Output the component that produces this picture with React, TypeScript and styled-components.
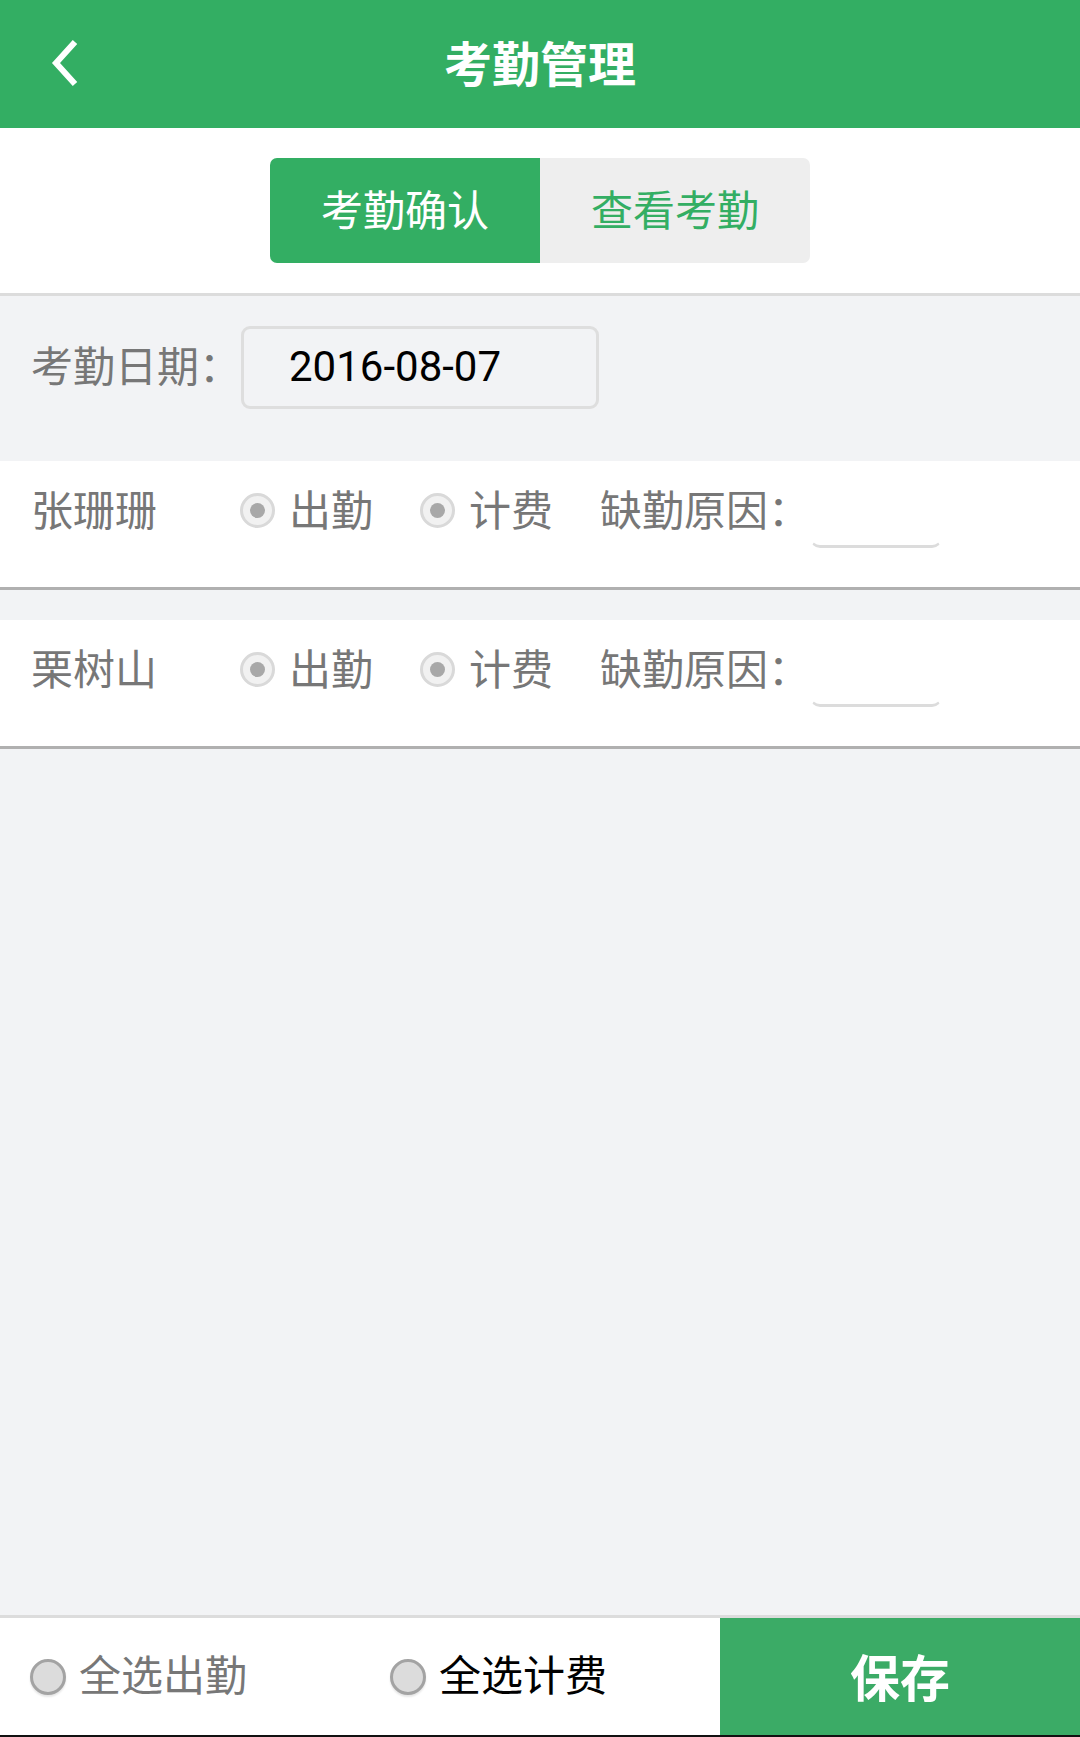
import styled, { createGlobalStyle } from 'styled-components';

const GlobalStyle = createGlobalStyle`
  html, body {
    margin: 0;
    padding: 0;
    background: #f2f3f5;
  }
  * {
    box-sizing: border-box;
  }
  body {
    font-family: Roboto, "Noto Sans CJK SC", sans-serif;
  }
`;

type TStaff = {
  id: number;
  name: string;
};

const staffList: TStaff[] = [
  { id: 1, name: '张珊珊' },
  { id: 2, name: '栗树山' },
];

const BackIcon = () => (
  <svg width='30' height='48' viewBox='0 0 30 48'>
    <polyline points='25,3 6,24 25,45' fill='none' stroke='#fff' strokeWidth='6' />
  </svg>
);

const App = () => {
  return (
    <>
      <GlobalStyle />
      <Page>
        <Header>
          <BackBtn>
            <BackIcon />
          </BackBtn>
          <Title>考勤管理</Title>
        </Header>

        <TabBar>
          <Tabs>
            <Tab active>考勤确认</Tab>
            <Tab>查看考勤</Tab>
          </Tabs>
        </TabBar>

        <DateSection>
          <Label>考勤日期：</Label>
          <DateBox>2016-08-07</DateBox>
        </DateSection>

        {staffList.map((staff) => (
          <StaffRow key={staff.id}>
            <Name>{staff.name}</Name>
            <Option>
              <Radio />
              <OptionText>出勤</OptionText>
            </Option>
            <Option>
              <Radio />
              <OptionText>计费</OptionText>
            </Option>
            <Label>缺勤原因：</Label>
            <ReasonInput />
          </StaffRow>
        ))}

        <Filler />

        <Footer>
          <SelectAll>
            <RoundCheck />
            <SelectText>全选出勤</SelectText>
          </SelectAll>
          <SelectAll>
            <RoundCheck />
            <SelectText dark>全选计费</SelectText>
          </SelectAll>
          <SaveBtn>保存</SaveBtn>
        </Footer>
      </Page>
    </>
  );
};

export default App;

const Page = styled.div`
  display: flex;
  flex-direction: column;
  height: 100vh;
  background: #f2f3f5;
`;

const Header = styled.div`
  position: relative;
  display: flex;
  align-items: center;
  justify-content: center;
  height: 128px;
  padding-bottom: 6px;
  background: #33ae63;
`;

const BackBtn = styled.div`
  position: absolute;
  left: 50px;
  top: 39px;
  display: flex;
`;

const Title = styled.div`
  font-size: 48px;
  font-weight: bold;
  color: #fff;
`;

const TabBar = styled.div`
  display: flex;
  justify-content: center;
  padding: 30px 0;
  background: #fff;
  border-bottom: 3px solid #dcdcdc;
`;

const Tabs = styled.div`
  display: flex;
  border-radius: 7px;
  overflow: hidden;
`;

const Tab = styled.div<{ active?: boolean }>`
  display: flex;
  align-items: center;
  justify-content: center;
  width: 270px;
  height: 105px;
  padding-bottom: 6px;
  font-size: 42px;
  color: ${({ active }) => (active ? '#fff' : '#33ae63')};
  background: ${({ active }) => (active ? '#33ae63' : '#eeeeee')};
`;

const DateSection = styled.div`
  display: flex;
  align-items: center;
  height: 165px;
  padding: 30px 0 52px 31px;
`;

const Label = styled.div`
  width: 210px;
  font-size: 42px;
  line-height: 48px;
  color: #777;
  white-space: nowrap;
`;

const DateBox = styled.div`
  display: flex;
  align-items: center;
  width: 358px;
  height: 83px;
  padding: 0 0 2px 45px;
  border: 3px solid #dedede;
  border-radius: 9px;
  font-size: 42px;
  color: #000;
`;

const StaffRow = styled.div`
  display: flex;
  align-items: flex-start;
  height: 129px;
  padding: 27px 0 0 31px;
  background: #fff;
  border-bottom: 3px solid #b0b0b0;

  & + & {
    margin-top: 30px;
  }
`;

const Name = styled.div`
  width: 209px;
  font-size: 42px;
  line-height: 48px;
  color: #777;
`;

const Option = styled.div`
  display: flex;
  align-items: center;
  gap: 14px;
  width: 180px;
  height: 48px;
`;

const Radio = styled.span`
  position: relative;
  width: 35px;
  height: 35px;
  margin-bottom: 3px;
  border: 3px solid #d9d9d9;
  border-radius: 50%;
  background: #f1f1f1;

  &::after {
    content: '';
    position: absolute;
    left: 7px;
    top: 7px;
    width: 15px;
    height: 15px;
    border-radius: 50%;
    background: #a8a8a8;
  }
`;

const OptionText = styled.span`
  font-size: 42px;
  line-height: 48px;
  color: #777;
`;

const ReasonInput = styled.div`
  width: 132px;
  height: 60px;
  border: 2px solid #fff;
  border-bottom: 3px solid #dcdcdc;
  border-radius: 10px;
  background: #fff;
`;

const Filler = styled.div`
  flex: 1;
`;

const Footer = styled.div`
  display: flex;
  height: 122px;
  background: #fff;
  border-top: 3px solid #dcdcdc;
  border-bottom: 2px solid #111;
`;

const SelectAll = styled.div`
  display: flex;
  align-items: center;
  gap: 13px;
  width: 360px;
  padding-left: 30px;
`;

const RoundCheck = styled.span`
  width: 36px;
  height: 36px;
  border-radius: 50%;
  border: 3px solid #a3a3a3;
  background: #dcdcdc;
  box-shadow: 0 2px 2px rgba(0, 0, 0, 0.1);
`;

const SelectText = styled.span<{ dark?: boolean }>`
  font-size: 42px;
  line-height: 48px;
  color: ${({ dark }) => (dark ? '#000' : '#777')};
`;

const SaveBtn = styled.div`
  display: flex;
  align-items: center;
  justify-content: center;
  flex: 1;
  padding-bottom: 4px;
  font-size: 50px;
  font-weight: bold;
  color: #fff;
  background: #3bab66;
`;
